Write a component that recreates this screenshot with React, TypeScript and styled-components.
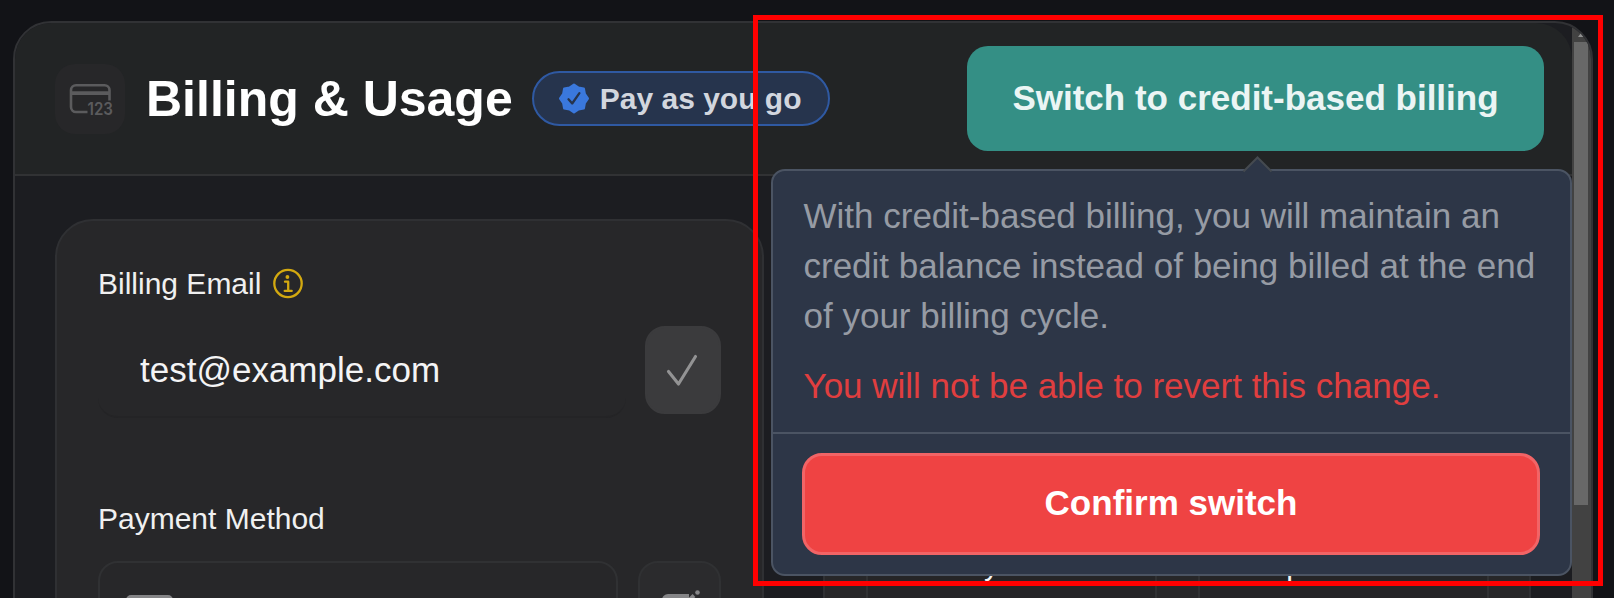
import React from 'react';
import styled, { createGlobalStyle } from 'styled-components';

const GlobalStyle = createGlobalStyle`
  *, *::before, *::after { box-sizing: border-box; }
  html, body { margin: 0; padding: 0; background: #121317; }
  body { font-family: "Liberation Sans", Arial, sans-serif; color: #f4f4f5; overflow: hidden; }
  button { font: inherit; cursor: pointer; }
  svg { display: block; flex: none; overflow: visible; }
`;

const Screen = styled.div`
  position: relative;
  width: 1614px;
  height: 598px;
  padding: 21px 21px 0 13px;
  overflow: hidden;
  background: #121317;
`;

const Modal = styled.section`
  display: flex;
  width: 1580px;
  height: 640px;
  border: 2px solid #313235;
  border-radius: 38px;
  overflow: hidden;
  background: #1c1d21;
`;

const Content = styled.div`
  flex: 1;
  min-width: 0;
`;

const Header = styled.header`
  display: flex;
  align-items: center;
  height: 153px;
  padding: 0 28px 0 40px;
  border-bottom: 2px solid #313234;
  border-radius: 36px 36px 0 0;
  background: #222425;
`;

const IconTile = styled.div`
  display: flex;
  align-items: center;
  justify-content: center;
  width: 70px;
  height: 70px;
  border-radius: 20px;
  background: #272729;
`;

const Title = styled.h1`
  margin: 0 0 0 21px;
  font-size: 50px;
  line-height: 58px;
  font-weight: 700;
  color: #fff;
  white-space: nowrap;
`;

const PlanBadge = styled.div`
  display: flex;
  align-items: center;
  gap: 11px;
  width: 298px;
  height: 55px;
  margin-left: 19px;
  padding-left: 25px;
  border: 2px solid #2f59a2;
  border-radius: 28px;
  background: #26344d;
  color: #d2d6de;
  font-size: 30px;
  font-weight: 700;
  white-space: nowrap;
`;

const SwitchButton = styled.button`
  width: 577px;
  height: 105px;
  margin-left: auto;
  padding: 0 0 2px;
  border: 0;
  border-radius: 21px;
  background: #348f85;
  color: #ebf5f4;
  font-size: 35px;
  font-weight: 700;
`;

const Body = styled.div`
  display: flex;
  gap: 59px;
  padding: 43px 0 0 40px;
`;

const Card = styled.div<{ $width: number }>`
  width: ${(p) => p.$width}px;
  height: 460px;
  border: 2px solid #2f3033;
  border-radius: 38px;
  background: #272729;
`;

const DetailsCard = styled(Card)`
  display: flex;
  flex-direction: column;
  gap: 52px;
  padding: 46px 41px 0;
`;

const Field = styled.div<{ $height: number }>`
  display: flex;
  flex-direction: column;
  gap: 25px;
  height: ${(p) => p.$height}px;
`;

const FieldLabel = styled.div`
  display: flex;
  align-items: center;
  gap: 12px;
  height: 34px;
  font-size: 30px;
  line-height: 34px;
  color: #f0f0f0;
`;

const FieldRow = styled.div<{ $gap: number }>`
  display: flex;
  gap: ${(p) => p.$gap}px;
`;

const UsageCard = styled(Card)`
  display: grid;
  grid-template-columns: 291px 291px;
  column-gap: 41px;
  padding: 41px 40px 0 41px;
`;

const UsageTile = styled.div<{ $indent: number }>`
  padding: 284px 0 0 ${(p) => p.$indent}px;
  border: 2px solid #303133;
  background: #252527;
  font-size: 30px;
  line-height: 34px;
`;

const EmailInput = styled.div`
  display: flex;
  align-items: center;
  width: 529px;
  height: 92px;
  padding: 0 0 2px 42px;
  border-radius: 20px;
  border-bottom: 2px solid #242426;
  font-size: 35px;
  color: #f4f4f5;
`;

const SquareButton = styled.button<{ $width: number; $bg: string; $border: string }>`
  display: flex;
  justify-content: center;
  align-items: center;
  width: ${(p) => p.$width}px;
  height: 88px;
  padding: 0;
  border: 2px solid ${(p) => p.$border};
  border-radius: 20px;
  background: ${(p) => p.$bg};
`;

const MethodBox = styled.div`
  display: flex;
  align-items: center;
  width: 521px;
  height: 88px;
  padding-left: 26px;
  border: 2px solid #303133;
  border-radius: 20px;
`;

const ScrollTrack = styled.div`
  width: 19px;
  padding: 0 3px 0 2px;
  background: #424242;
`;

const ScrollArrow = styled.div`
  display: flex;
  justify-content: center;
  height: 19px;
  padding-top: 10px;
`;

const ScrollThumb = styled.div`
  height: 463px;
  background: #686868;
`;

const Popover = styled.div`
  position: absolute;
  left: 771px;
  top: 169px;
  width: 801px;
  height: 407px;
  border: 2px solid #4b5463;
  border-radius: 14px;
  background: #2d3647;
`;

const PopoverArrow = styled.svg`
  position: absolute;
  left: 470px;
  top: -15px;
`;

const PopoverBody = styled.div`
  height: 263px;
  padding: 19.5px 30px 0 30.5px;
  border-bottom: 2px solid #4b5463;
  font-size: 35px;
  line-height: 50px;
  color: #969ba4;
  white-space: nowrap;
`;

const Message = styled.p`
  margin: 0;
`;

const Warning = styled.p`
  margin: 20px 0 0;
  color: #e03e3f;
`;

const PopoverFooter = styled.div`
  padding: 19px 30px 0 29px;
`;

const ConfirmButton = styled.button`
  display: block;
  width: 738px;
  height: 102px;
  padding: 0 0 3px;
  border: 3px solid #f26466;
  border-radius: 20px;
  background: #ef4343;
  color: #fff;
  font-size: 35px;
  font-weight: 700;
`;

const Highlight = styled.div`
  position: absolute;
  left: 753px;
  top: 15px;
  width: 850px;
  height: 571px;
  border: 5px solid #ff0000;
  pointer-events: none;
`;

const CardNumberIcon = () => (
  <svg width="46" height="40" viewBox="0 0 46 40" fill="none" stroke="#5b5b5d" strokeWidth="2.6">
    <path d="M20.500 33H9a5 5 0 0 1-5-5V11.200a5 5 0 0 1 5-5h28.500a5 5 0 0 1 5 5V21.500" />
    <path d="M4 14.200h38.500" strokeWidth="3.8" />
    <text x="20.500" y="36" fill="#5b5b5d" stroke="none" fontFamily="Inter, sans-serif" fontSize="17" fontWeight="600" textLength="25.500" lengthAdjust="spacingAndGlyphs">123</text>
  </svg>
);

const SealIcon = () => (
  <svg width="30" height="31" viewBox="0 0 30 31">
    <path
      d="M15 1.700L19.440 4.800 24.760 5.740 25.700 11.060 28.800 15.500 25.700 19.940 24.760 25.260 19.440 26.200 15 29.300 10.560 26.200 5.240 25.260 4.300 19.940 1.200 15.500 4.300 11.060 5.240 5.740 10.560 4.800z"
      fill="#3a78dd" stroke="#3a78dd" strokeWidth="2.400" strokeLinejoin="round"
    />
    <path d="M9.500 16.300l3.700 4.200 7.200-10.300" fill="none" stroke="#26344d" strokeWidth="2.300" strokeLinecap="round" strokeLinejoin="round" />
  </svg>
);

const InfoIcon = () => (
  <svg width="30" height="30" viewBox="0 0 30 30" fill="none" stroke="#d3a910" strokeWidth="2.3">
    <circle cx="15" cy="14.500" r="13.700" />
    <circle cx="14.400" cy="8" r="1.900" fill="#d3a910" stroke="none" />
    <path d="M12 12.700h3.200v9M11.700 21.900h7" strokeLinecap="round" strokeLinejoin="round" />
  </svg>
);

const CheckIcon = () => (
  <svg width="32" height="32" viewBox="0 0 32 32" fill="none" stroke="#939394" strokeWidth="3.100" strokeLinecap="round" strokeLinejoin="round">
    <path d="M1.500 17.500L11.500 30 28.500 2.500" />
  </svg>
);

const BankCardIcon = () => (
  <svg width="48" height="34" viewBox="0 0 48 34">
    <rect width="47" height="30" rx="5" y="7" fill="#858587" />
  </svg>
);

const EditIcon = () => (
  <svg width="40" height="40" viewBox="0 0 40 40" fill="none" stroke="#858587" strokeWidth="4">
    <path d="M29 11H8a4 4 0 0 0-4 4v18a4 4 0 0 0 4 4h20a4 4 0 0 0 4-4V23" />
    <path d="M18 26L34 10.500" />
    <circle cx="37.500" cy="7.500" r="2.300" fill="#858587" stroke="none" />
  </svg>
);

export default function App() {
  return (
    <>
      <GlobalStyle />
      <Screen>
        <Modal>
          <Content>
            <Header>
              <IconTile><CardNumberIcon /></IconTile>
              <Title>Billing &amp; Usage</Title>
              <PlanBadge><SealIcon />Pay as you go</PlanBadge>
              <SwitchButton>Switch to credit-based billing</SwitchButton>
            </Header>
            <Body>
              <DetailsCard $width={709}>
                <Field $height={183}>
                  <FieldLabel>Billing Email <InfoIcon /></FieldLabel>
                  <FieldRow $gap={19}>
                    <EmailInput>test@example.com</EmailInput>
                    <SquareButton $width={76} $bg="#3b3b3d" $border="#3b3b3d"><CheckIcon /></SquareButton>
                  </FieldRow>
                </Field>
                <Field $height={147}>
                  <FieldLabel>Payment Method</FieldLabel>
                  <FieldRow $gap={20}>
                    <MethodBox><BankCardIcon /></MethodBox>
                    <SquareButton $width={83} $bg="#2b2b2d" $border="#303133"><EditIcon /></SquareButton>
                  </FieldRow>
                </Field>
              </DetailsCard>
              <UsageCard $width={708}>
                <UsageTile $indent={26}>Monthly</UsageTile>
                <UsageTile $indent={23}>Compute</UsageTile>
              </UsageCard>
            </Body>
          </Content>
          <ScrollTrack>
            <ScrollArrow>
              <svg width="6" height="5" viewBox="0 0 6 5"><path d="M3 0l3 4H0z" fill="#909090" /></svg>
            </ScrollArrow>
            <ScrollThumb />
          </ScrollTrack>
        </Modal>
        <Popover>
          <PopoverArrow width="30" height="18" viewBox="0 0 30 18">
            <path d="M.5 15.500L14.500 1.500 28.500 15.500v2.500H.5z" fill="#2d3647" />
            <path d="M.5 15.500L14.500 1.500l14 14" fill="none" stroke="#454a50" strokeWidth="2" />
          </PopoverArrow>
          <PopoverBody>
            <Message>With credit-based billing, you will maintain an<br />credit balance instead of being billed at the end<br />of your billing cycle.</Message>
            <Warning>You will not be able to revert this change.</Warning>
          </PopoverBody>
          <PopoverFooter><ConfirmButton>Confirm switch</ConfirmButton></PopoverFooter>
        </Popover>
        <Highlight />
      </Screen>
    </>
  );
}
